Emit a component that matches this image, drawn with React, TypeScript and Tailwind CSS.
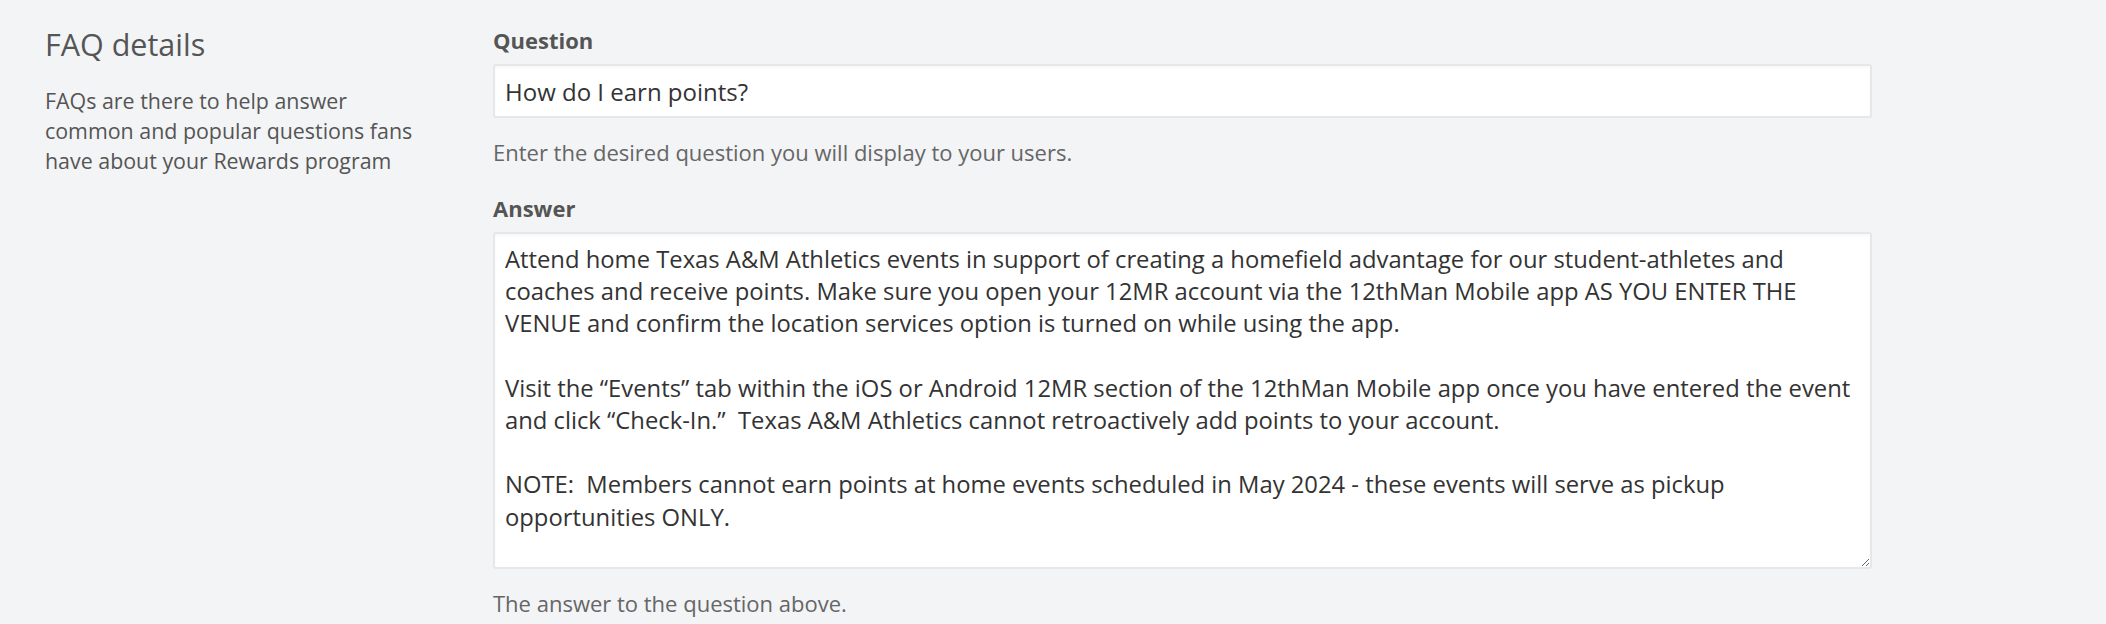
import React from 'react';

const answer = `Attend home Texas A&M Athletics events in support of creating a homefield advantage for our student-athletes and coaches and receive points. Make sure you open your 12MR account via the 12thMan Mobile app AS YOU ENTER THE VENUE and confirm the location services option is turned on while using the app.

Visit the “Events” tab within the iOS or Android 12MR section of the 12thMan Mobile app once you have entered the event and click “Check-In.”  Texas A&M Athletics cannot retroactively add points to your account.

NOTE:  Members cannot earn points at home events scheduled in May 2024 - these events will serve as pickup opportunities ONLY.`;

export default function App() {
  return (
    <div className="min-h-screen bg-[#f3f4f6] font-['Open_Sans',sans-serif]">
      <div className="flex pl-[45px] pt-[24px]">
        {/* Left: section description */}
        <div className="w-[448px] shrink-0">
          <h2 className="text-[30.5px] leading-[40px] text-[#555]">FAQ details</h2>
          <p className="mt-[22px] w-[390px] text-[21.4px] leading-[30px] text-[#555]">
            FAQs are there to help answer common and popular questions fans have about your Rewards program
          </p>
        </div>

        {/* Right: form fields */}
        <div className="w-[1379px] shrink-0 pt-[2px]">
          <label htmlFor="question" className="block text-[22px] leading-[28px] font-bold text-[#555]">
            Question
          </label>
          <input
            id="question"
            type="text"
            defaultValue="How do I earn points?"
            className="mt-[10px] block h-[54px] w-full rounded-[3px] border-2 border-[#e6e7e9] bg-white px-[10px] text-[24px] text-[#333] shadow-[inset_0_2px_2px_rgba(0,0,0,0.03)] outline-none"
          />
          <p className="mt-[19px] text-[22px] leading-[30px] text-[#666]">
            Enter the desired question you will display to your users.
          </p>

          <label htmlFor="answer" className="mt-[27px] block text-[22px] leading-[28px] font-bold text-[#555]">
            Answer
          </label>
          <textarea
            id="answer"
            defaultValue={answer}
            className="mt-[10px] block h-[337px] w-full rounded-[3px] border-2 border-[#e6e7e9] bg-white px-[10px] pt-[9px] text-[23.8px] leading-[32.2px] text-[#333] shadow-[inset_0_2px_2px_rgba(0,0,0,0.03)] outline-none"
          />
          <p className="mt-[19px] text-[22px] leading-[30px] text-[#666]">The answer to the question above.</p>
        </div>
      </div>
    </div>
  );
}
